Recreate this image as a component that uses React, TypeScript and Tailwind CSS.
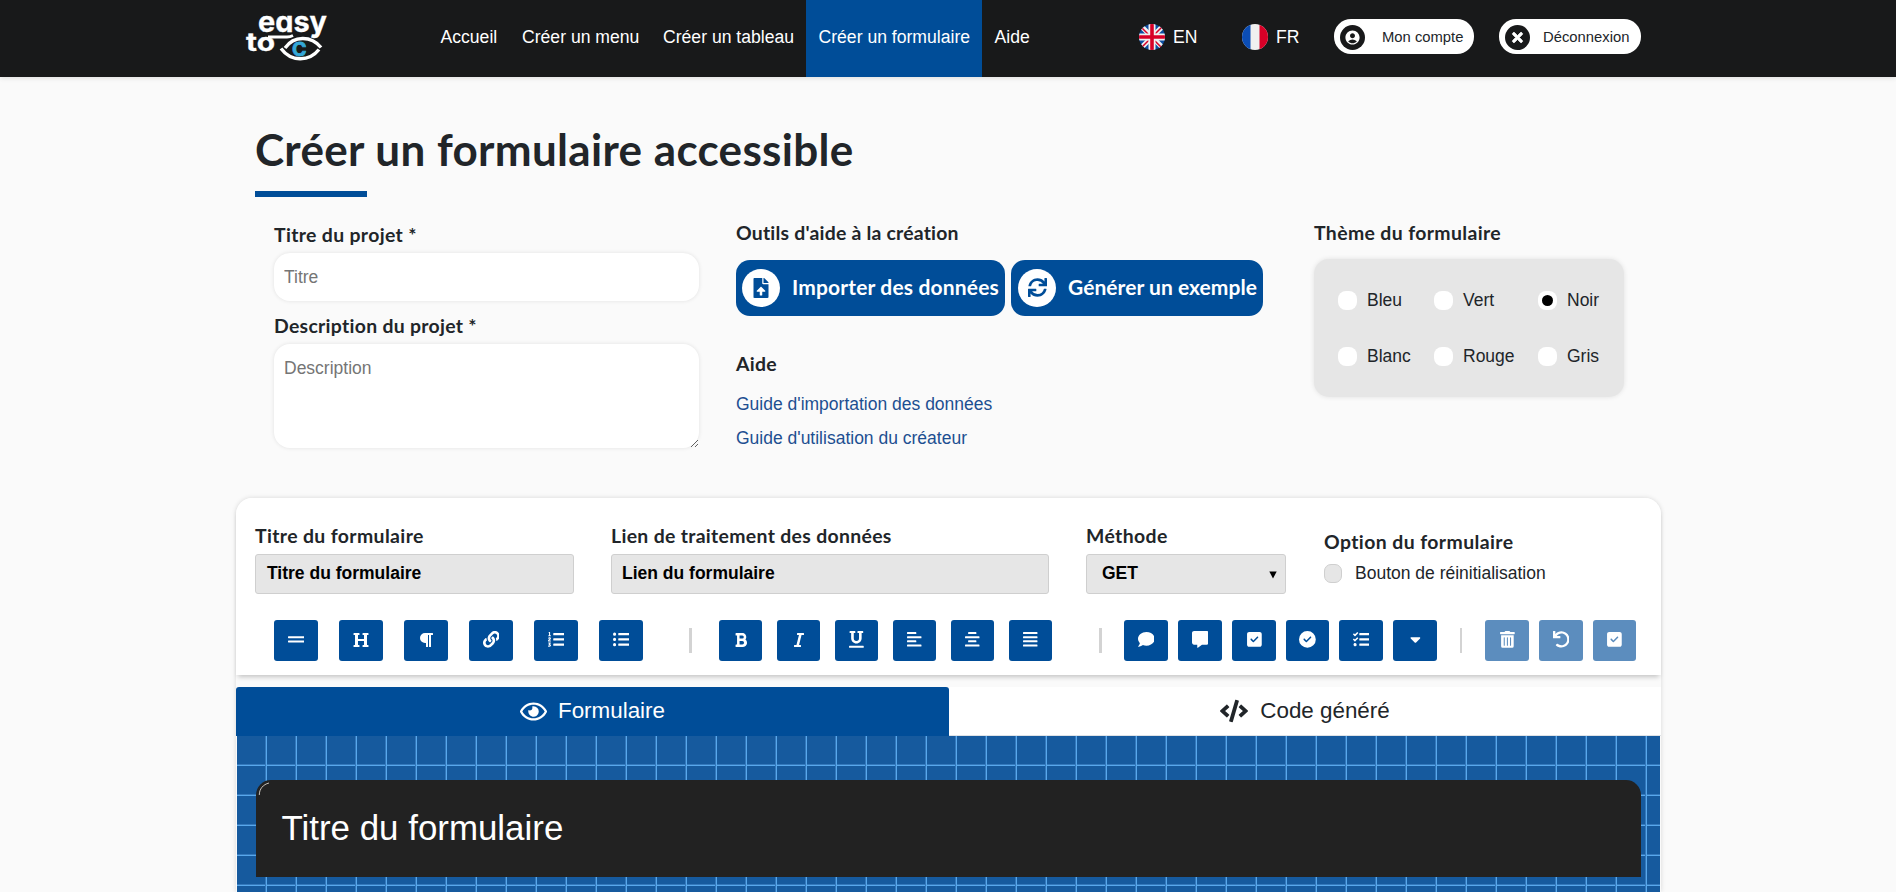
import type { ReactNode } from "react";
import {
  FaAlignCenter, FaAlignJustify, FaAlignLeft, FaBold, FaCaretDown, FaCode, FaComment,
  FaCommentAlt, FaFileUpload, FaGripLines, FaHeading, FaItalic, FaLink, FaListOl, FaListUl,
  FaParagraph, FaRegEye, FaSync, FaTasks, FaTimes, FaTrashAlt, FaUnderline, FaUndo,
} from "react-icons/fa";
import { FaCircleCheck, FaSquareCheck } from "react-icons/fa6";
import { MdAccountCircle } from "react-icons/md";

const label = "block pt-px h-6 font-[Lato,sans-serif] text-[19.4px] leading-6 font-bold whitespace-nowrap text-[#212529] [font-variant-ligatures:none]";

function Logo() {
  return (
    <svg className="block h-[60px] w-[94px]" viewBox="236 6 94 60" fontFamily="Inter, sans-serif" fontWeight="700">
      <text className="[font-feature-settings:'cv11']" x="258" y="32" fill="#fff" stroke="#fff" strokeWidth="0.3" fontSize="28.5" textLength="69" lengthAdjust="spacingAndGlyphs">easy</text>
      <text x="246" y="51" fill="#fff" stroke="#fff" strokeWidth="0.3" fontSize="25" textLength="29" lengthAdjust="spacingAndGlyphs">to</text>
      <g fill="none" stroke="#fff" strokeWidth="3.4">
        <path d="M268 37H287C290 37 291 36.6 293 35.6" strokeWidth="2.8" />
        <path d="M285 48C294 35.5 311 35.5 321 47.5" />
        <path d="M281 48.5C291 62 309 62 319 49.5" />
      </g>
      <text x="292" y="55.5" fill="#35a8d8" stroke="#35a8d8" strokeWidth="0.8" fontSize="18.5" textLength="14.5" lengthAdjust="spacingAndGlyphs">C</text>
    </svg>
  );
}

function FlagUK() {
  return (
    <svg className="block size-[26px]" viewBox="0 0 26 26">
      <clipPath id="uk"><circle cx="13" cy="13" r="13" /></clipPath>
      <g clipPath="url(#uk)">
        <path fill="#0b4da2" d="M0 0h26v26H0z" />
        <path stroke="#f0f0f0" strokeWidth="5" d="M0 0L26 26M26 0L0 26" />
        <path stroke="#d80027" strokeWidth="1.5" d="M0 1L26 27M26 0L0 26" />
        <path stroke="#f0f0f0" strokeWidth="7" d="M13 0V26M0 13H26" />
        <path stroke="#d80027" strokeWidth="3.6" d="M13 0V26M0 13H26" />
      </g>
    </svg>
  );
}

function FlagFR() {
  return (
    <svg className="block size-[26px]" viewBox="0 0 26 26">
      <clipPath id="fr"><circle cx="13" cy="13" r="13" /></clipPath>
      <g clipPath="url(#fr)">
        <path fill="#f0f0f0" d="M0 0h26v26H0z" />
        <path fill="#0b4db5" d="M0 0h8.5v26H0z" />
        <path fill="#d80027" d="M17.5 0H26v26h-8.5z" />
      </g>
    </svg>
  );
}

function Header() {
  return (
    <header className="flex h-[77px] items-start bg-[#18191a] pl-[236px] font-['Liberation_Sans',Arial,sans-serif] text-[17.6px] text-white shadow-[0_1px_5px_rgba(0,0,0,0.12)]">
      <div className="mt-[6px] mr-[98px]"><Logo /></div>
      <nav className="flex leading-[74px] whitespace-nowrap">
        <a className="w-[82px] pl-[12.5px]">Accueil</a>
        <a className="w-[141px] pl-[12px]">Créer un menu</a>
        <a className="w-[155px] pl-[12px]">Créer un tableau</a>
        <a className="h-[77px] w-[176px] bg-[#004d98] pl-[12.5px]">Créer un formulaire</a>
        <a className="w-[60px] pl-[12.5px]">Aide</a>
      </nav>
      <div className="mt-[23.5px] ml-[97px] flex w-[103px] items-center gap-[8px] leading-[27px]"><FlagUK />EN</div>
      <div className="mt-[23.5px] flex w-[92px] items-center gap-[8px] leading-[27px]"><FlagFR />FR</div>
      <button className="mt-[19px] flex h-[35px] w-[140px] items-center rounded-[17px] bg-white pt-px pl-[6px] text-[14.8px] text-[#212529]">
        <span className="mr-[17px] flex size-[25px] items-center justify-center rounded-full bg-[#18191a]"><MdAccountCircle className="size-[17px] text-white" /></span>
        Mon compte
      </button>
      <button className="mt-[19px] ml-[25px] flex h-[35px] w-[142px] items-center rounded-[17px] bg-white pt-px pl-[6px] text-[14.8px] text-[#212529]">
        <span className="mr-[13px] flex size-[25px] items-center justify-center rounded-full bg-[#18191a]"><FaTimes className="size-[15px] text-white" stroke="white" strokeWidth="24" /></span>
        Déconnexion
      </button>
    </header>
  );
}

function Theme({ name, checked }: { name: string; checked?: boolean }) {
  return (
    <label className="flex items-center gap-[10px] leading-5 whitespace-nowrap">
      <span className="flex size-[19px] items-center justify-center rounded-[8px] bg-white">
        {checked && <span className="size-[11px] rounded-full bg-black" />}
      </span>
      {name}
    </label>
  );
}

function Tool({ w, off, children }: { w: string; off?: boolean; children: ReactNode }) {
  return (
    <button className={`${w} flex h-[41px] shrink-0 items-center justify-center rounded-[3px] pb-[2px] text-white ${off ? "bg-[#5c8dbe]" : "bg-[#004d98]"}`}>
      {children}
    </button>
  );
}

export default function App() {
  return (
    <div className="h-[892px] overflow-hidden bg-[#fafafa] font-['Liberation_Sans',Arial,sans-serif] text-[17.5px] text-[#212529]">
      <Header />
      <main className="ml-[236px] w-[1425px]">
        <div className="pt-[45px] pl-[19px]">
          <h1 className="h-[53px] font-[Lato,sans-serif] text-[44px] leading-[54px] font-bold tracking-[0.3px] [word-spacing:0.5px] whitespace-nowrap">Créer un formulaire accessible</h1>
          <div className="mt-[16px] h-[6px] w-[112px] bg-[#004d98]" />
        </div>

        <section className="flex h-[301px] pl-[38px]">
          <div className="w-[425px] pt-[25px]">
            <label className={`${label} tracking-[0.35px]`}>Titre du projet *</label>
            <input placeholder="Titre" className="mt-[7px] block h-[48px] w-full rounded-[16px] bg-white px-[10px] shadow-[0_0_4px_rgba(0,0,0,0.1)] placeholder:text-[#757575]" />
            <label className={`${label} mt-[12px] tracking-[0.3px]`}>Description du projet *</label>
            <textarea placeholder="Description" className="mt-[7px] block h-[104px] w-full resize rounded-[16px] bg-white px-[10px] py-[14px] leading-5 shadow-[0_0_4px_rgba(0,0,0,0.1)] placeholder:text-[#757575]" />
          </div>

          <div className="ml-[37px] w-[578px] pt-[23px]">
            <h2 className={`${label} tracking-[0.22px]`}>Outils d'aide à la création</h2>
            <div className="mt-[16px] flex gap-[6px] font-[Lato,sans-serif] text-[21px] font-bold whitespace-nowrap text-white">
              <button className="flex h-[56px] w-[269px] items-center rounded-[14px] bg-[#004d98] pb-px pl-[6px]">
                <span className="mr-[12px] flex size-[38px] items-center justify-center rounded-full bg-white"><FaFileUpload className="size-[20px] text-[#004d98]" /></span>
                <span className="mb-px tracking-[0.16px]">Importer des données</span>
              </button>
              <button className="flex h-[56px] w-[252px] items-center rounded-[14px] bg-[#004d98] pb-px pl-[7px]">
                <span className="mr-[12px] flex size-[38px] items-center justify-center rounded-full bg-white"><FaSync className="size-[19px] text-[#004d98]" /></span>
                <span className="mb-px tracking-[0.05px]">Générer un exemple</span>
              </button>
            </div>
            <h2 className={`${label} mt-[35px] tracking-[0.3px]`}>Aide</h2>
            <a className="mt-[19px] block leading-5 text-[#1d4f91]">Guide d'importation des données</a>
            <a className="mt-[14px] block leading-5 text-[#1d4f91]">Guide d'utilisation du créateur</a>
          </div>

          <div className="w-[310px] pt-[23px]">
            <h2 className={`${label} tracking-[0.38px]`}>Thème du formulaire</h2>
            <div className="mt-[15px] grid h-[138px] grid-cols-[96px_104px_90px] grid-rows-[20px_20px] gap-y-[36px] rounded-[15px] bg-[#e6e6e6] pt-[31px] pl-[24px] shadow-[0_0_5px_rgba(0,0,0,0.1)]">
              <Theme name="Bleu" /><Theme name="Vert" /><Theme name="Noir" checked />
              <Theme name="Blanc" /><Theme name="Rouge" /><Theme name="Gris" />
            </div>
          </div>
        </section>

        <section className="rounded-t-[16px] bg-[#fafafa] shadow-[0_0_5px_rgba(0,0,0,0.14)]">
          <div className="h-[177px] rounded-t-[16px] bg-white pt-[25px] shadow-[0_4px_5px_-2px_rgba(0,0,0,0.22)]">
            <div className="flex h-[97px] pl-[19px]">
              <div className="w-[319px]">
                <label className={`${label} tracking-[0.38px]`}>Titre du formulaire</label>
                <div className="mt-[7px] h-[40px] rounded-[3px] border border-[#cfcfcf] bg-[#e6e6e6] pl-[11px] leading-[37px] font-bold text-black">Titre du formulaire</div>
              </div>
              <div className="ml-[37px] w-[438px]">
                <label className={`${label} tracking-[0.33px]`}>Lien de traitement des données</label>
                <div className="mt-[7px] h-[40px] rounded-[3px] border border-[#cfcfcf] bg-[#e6e6e6] pl-[10px] leading-[37px] font-bold text-black">Lien du formulaire</div>
              </div>
              <div className="ml-[37px] w-[200px]">
                <label className={`${label} tracking-[0.4px]`}>Méthode</label>
                <div className="mt-[7px] flex h-[40px] items-start justify-between rounded-[3px] border border-[#cfcfcf] bg-[#e6e6e6] pr-[8px] pl-[15px] leading-[37px] font-bold text-black">
                  GET
                  <svg className="mt-[16px] h-[8px] w-[8px]" viewBox="0 0 8 8"><path d="M0.3 0.5h7.4L4 7.5z" /></svg>
                </div>
              </div>
              <div className="ml-[38px] pt-[6px]">
                <h2 className={`${label} tracking-[0.42px]`}>Option du formulaire</h2>
                <label className="mt-[10px] flex items-center gap-[13px] leading-5 whitespace-nowrap">
                  <span className="h-[19px] w-[18px] rounded-[7px] border border-[#cfcfcf] bg-[#e6e6e6]" />
                  Bouton de réinitialisation
                </label>
              </div>
            </div>

            <div className="flex items-center pl-[38px] text-[16.8px]">
              <div className="flex gap-[21px]">
                <Tool w="w-[44px]"><FaGripLines /></Tool>
                <Tool w="w-[44px]"><FaHeading className="size-[16px]" /></Tool>
                <Tool w="w-[44px]"><FaParagraph className="size-[16px]" /></Tool>
                <Tool w="w-[44px]"><FaLink /></Tool>
                <Tool w="w-[44px]"><FaListOl /></Tool>
                <Tool w="w-[44px]"><FaListUl /></Tool>
              </div>
              <span className="mr-[27px] ml-[46px] h-[25px] w-[3px] bg-[#d3d3d3]" />
              <div className="flex gap-[15px]">
                <Tool w="w-[43px]"><FaBold className="size-[16px]" /></Tool>
                <Tool w="w-[43px]"><FaItalic className="size-[16px]" /></Tool>
                <Tool w="w-[43px]"><FaUnderline /></Tool>
                <Tool w="w-[43px]"><FaAlignLeft className="size-[16.5px]" /></Tool>
                <Tool w="w-[43px]"><FaAlignCenter className="size-[16.5px]" /></Tool>
                <Tool w="w-[43px]"><FaAlignJustify className="size-[16.5px]" /></Tool>
              </div>
              <span className="mr-[22px] ml-[47px] h-[25px] w-[3px] bg-[#d3d3d3]" />
              <div className="flex gap-[10px]">
                <Tool w="w-[44px]"><FaComment /></Tool>
                <Tool w="w-[44px]"><FaCommentAlt /></Tool>
                <Tool w="w-[44px]"><FaSquareCheck /></Tool>
                <Tool w="w-[43px]"><FaCircleCheck /></Tool>
                <Tool w="w-[44px]"><FaTasks /></Tool>
                <Tool w="w-[44px]"><FaCaretDown /></Tool>
              </div>
              <span className="mr-[23px] ml-[23px] h-[25px] w-[2px] bg-[#d3d3d3]" />
              <div className="flex gap-[10px]">
                <Tool w="w-[44px]" off><FaTrashAlt /></Tool>
                <Tool w="w-[44px]" off><FaUndo /></Tool>
                <Tool w="w-[43px]" off><FaSquareCheck /></Tool>
              </div>
            </div>
          </div>

          <div className="mt-[12px] flex h-[49px] text-[22.4px] leading-[48px]">
            <div className="flex w-[713px] items-center justify-center gap-[11px] rounded-t-[3px] bg-[#004d98] pb-px text-white"><FaRegEye className="size-[27px]" />Formulaire</div>
            <div className="flex w-[712px] items-center justify-center gap-[12px] border-b border-[#dee2e6] bg-white"><FaCode className="size-[28px]" />Code généré</div>
          </div>

          <div className="mx-px h-[156px] bg-[#165a9e] bg-[linear-gradient(to_right,transparent_28px,#3478bb_28px,#3478bb_29px,#58a8ec_29px),linear-gradient(to_bottom,transparent_28px,#3478bb_28px,#3478bb_29px,#58a8ec_29px)] bg-size-[30px_30px] px-[19px] pt-[44px]">
            <div className="relative h-[97px] rounded-t-[15px] bg-[#222] pt-[28px] pl-[25.5px] text-[34.9px] leading-[40px] text-white">
              Titre du formulaire
              <svg className="absolute top-0 left-0 size-[16px]" viewBox="0 0 16 16"><path d="M3.3 15C3.3 9 7 4.5 13 3" fill="none" stroke="#d8d2cc" strokeWidth="0.9" /></svg>
            </div>
          </div>
        </section>
      </main>
    </div>
  );
}
